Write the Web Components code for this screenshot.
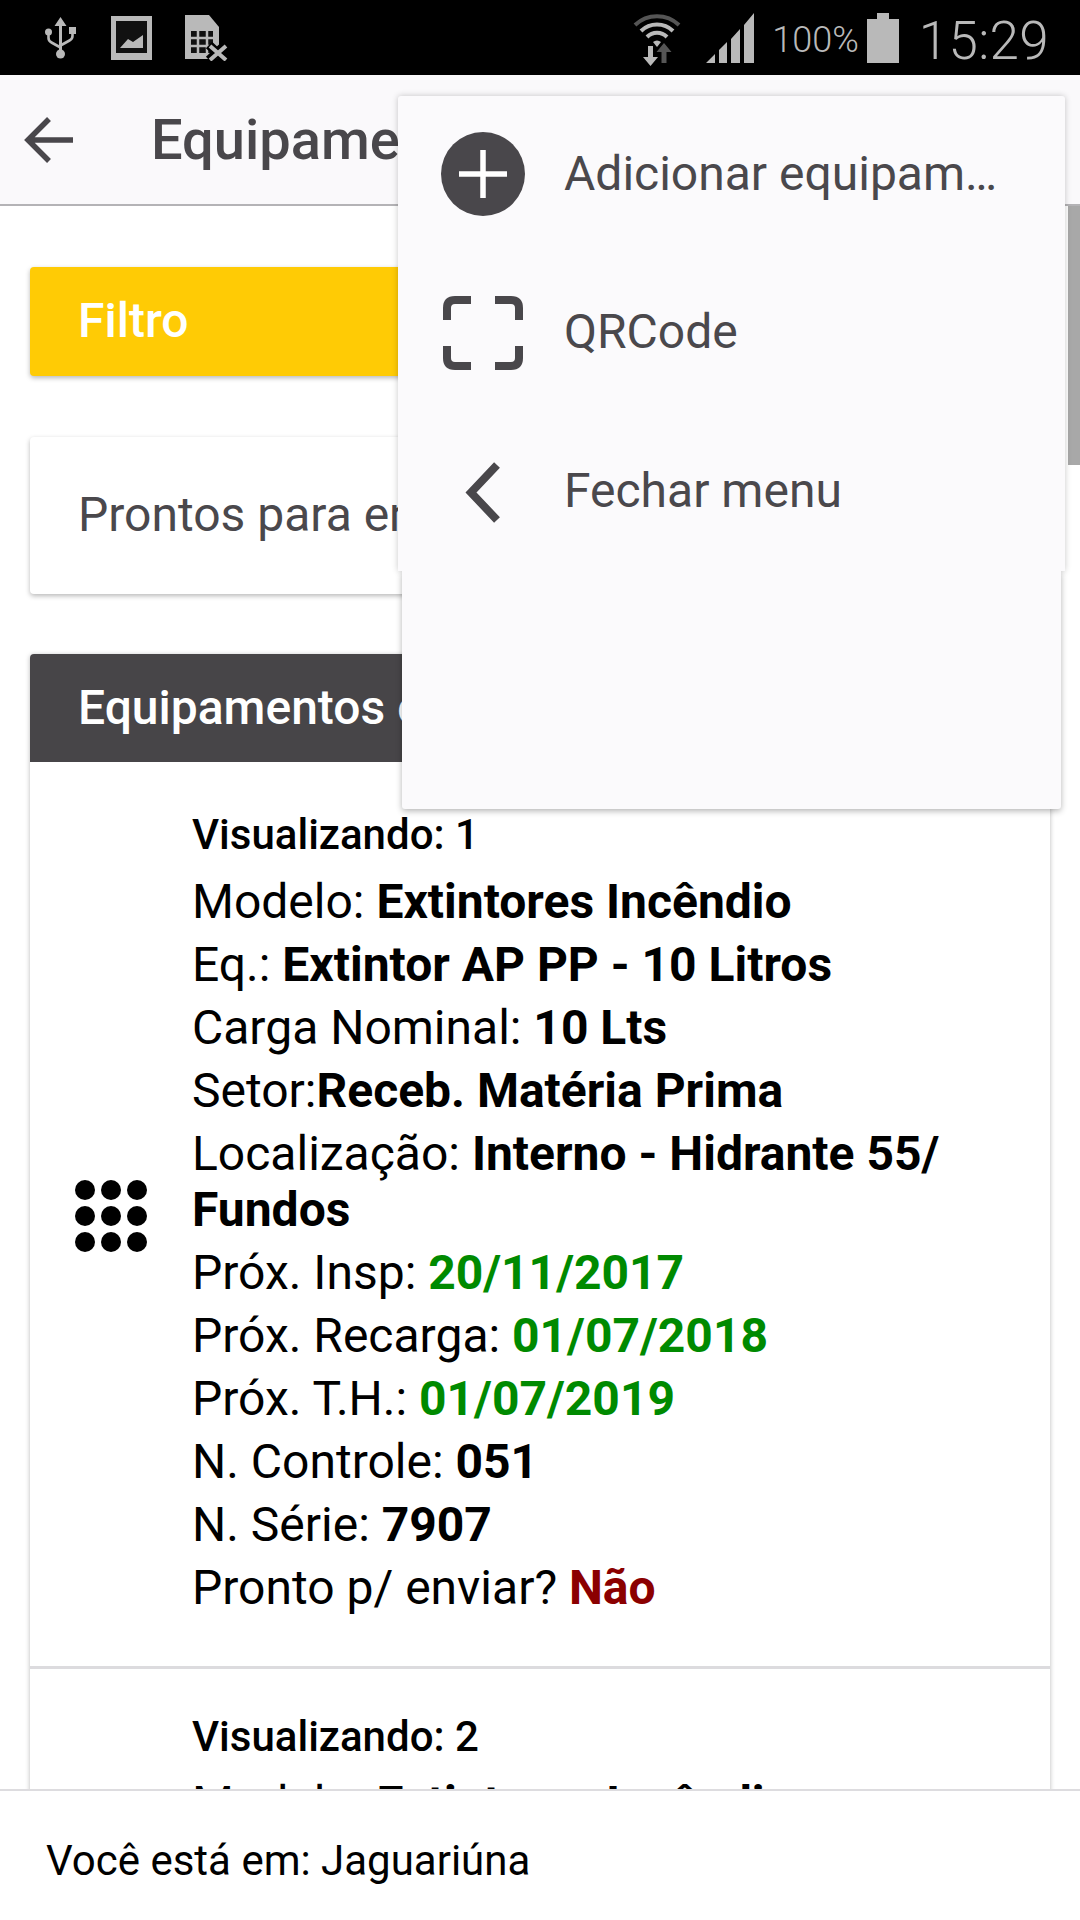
<!DOCTYPE html>
<html lang="pt-BR">
<head>
<meta charset="utf-8">
<title>Equipamentos</title>
<style>
  html, body { margin: 0; padding: 0; }
  body { width: 1080px; height: 1920px; overflow: hidden; font-family: Roboto, "Liberation Sans", sans-serif; background: #fff; }
</style>
</head>
<body>
<app-screen>
  <status-bar slot="status"></status-bar>
  <app-header slot="header">Equipamentos</app-header>

  <info-card tone="yellow">Filtro</info-card>
  <info-card tone="white">Prontos para enviar</info-card>
  <equipment-list heading="Equipamentos c">
    <equipment-row>
      <eq-line head>Visualizando: 1</eq-line>
      <eq-line>Modelo: <b>Extintores Incêndio</b></eq-line>
      <eq-line>Eq.: <b>Extintor AP PP - 10 Litros</b></eq-line>
      <eq-line>Carga Nominal: <b>10 Lts</b></eq-line>
      <eq-line>Setor:<b>Receb. Matéria Prima</b></eq-line>
      <eq-line>Localização: <b>Interno - Hidrante 55/ Fundos</b></eq-line>
      <eq-line>Próx. Insp: <b class="ok">20/11/2017</b></eq-line>
      <eq-line>Próx. Recarga: <b class="ok">01/07/2018</b></eq-line>
      <eq-line>Próx. T.H.: <b class="ok">01/07/2019</b></eq-line>
      <eq-line>N. Controle: <b>051</b></eq-line>
      <eq-line>N. Série: <b>7907</b></eq-line>
      <eq-line>Pronto p/ enviar? <b class="no">Não</b></eq-line>
    </equipment-row>
    <!-- the rest of this row is under the footer, min-height keeps its dots out of view -->
    <equipment-row style="min-height: 900px; align-items: start">
      <eq-line head>Visualizando: 2</eq-line>
      <eq-line>Modelo: <b>Extintores Incêndio</b></eq-line>
    </equipment-row>
  </equipment-list>

  <side-menu slot="overlay">
    <menu-item icon="plus">Adicionar equipam…</menu-item>
    <menu-item icon="scan">QRCode</menu-item>
    <menu-item icon="back">Fechar menu</menu-item>
  </side-menu>

  <app-footer slot="footer">Você está em: Jaguariúna</app-footer>
</app-screen>

<script>
class AppScreen extends HTMLElement {
  constructor() {
    super();
    this.attachShadow({ mode: "open" }).innerHTML = `
      <style>
        :host { display: flex; flex-direction: column; position: relative; width: 1080px; height: 1920px; overflow: hidden; }
        .content { flex: 1; min-height: 0; overflow: hidden; padding: 61px 30px 0; display: flex; flex-direction: column; gap: 61px; }
        .scrollbar { position: absolute; right: 0; top: 206px; width: 12px; height: 259px; background: #a8a8a8; }
      </style>
      <slot name="status"></slot>
      <slot name="header"></slot>
      <div class="content"><slot></slot></div>
      <slot name="footer"></slot>
      <div class="scrollbar"></div>
      <slot name="overlay"></slot>
    `;
  }
}

class StatusBar extends HTMLElement {
  constructor() {
    super();
    this.attachShadow({ mode: "open" }).innerHTML = `
      <style>
        :host { display: flex; align-items: center; justify-content: space-between; height: 75px; background: #000; color: #b9b9b9; font-family: Roboto, sans-serif; font-weight: 300; flex: none; }
        .left, .right { display: flex; align-items: center; }
        .left { padding-left: 45px; gap: 35px; }
        .right { padding-right: 31px; }
        svg { display: block; }
        .pct { font-size: 36px; margin: 0 8px 0 18px; padding-top: 5px; }
        .time { font-size: 53px; margin-left: 20px; letter-spacing: .3px; padding-top: 7px; }
      </style>
      <div class="left">
        <svg width="31" height="42" viewBox="0 0 31 42" fill="#b9b9b9">
          <path d="M15.500 0l6 9h-4.500v24h-3v-24h-4.500z"/>
          <circle cx="15.500" cy="37" r="4.500"/>
          <circle cx="3.500" cy="15" r="3.500"/>
          <rect x="24" y="10" width="7" height="7"/>
          <path d="M3.500 15v6q0 3 3 4.500l9 5M27.500 15v4q0 3-3 4.500l-9 5" fill="none" stroke="#b9b9b9" stroke-width="2.600"/>
        </svg>
        <svg width="41" height="44" viewBox="0 0 41 44">
          <rect x="0" y="0" width="41" height="44" fill="#b9b9b9"/>
          <rect x="5" y="5" width="31" height="32" fill="#111"/>
          <path d="M9 32l8-9 5 3 10-7v13z" fill="#b9b9b9"/>
        </svg>
        <svg style="margin-left:-2px" width="44" height="46" viewBox="0 0 44 46">
          <path d="M0 0h24l10 12v32h-34z" fill="#b9b9b9"/>
          <rect x="6" y="16" width="22" height="22" fill="#111"/>
          <path d="M13 16v22M22 16v22M6 23h22M6 31h22" stroke="#b9b9b9" stroke-width="2.500"/>
          <path d="M24 30l16 15M40 30l-16 15" stroke="#000" stroke-width="9"/>
          <path d="M25 31l16 14M41 31l-16 14" stroke="#b9b9b9" stroke-width="4"/>
        </svg>
      </div>
      <div class="right">
        <svg width="50" height="56" viewBox="0 0 50 56" fill="none">
          <path d="M3 15a32 32 0 0 1 44 0" stroke="#555" stroke-width="4"/>
          <path d="M9 21a23 23 0 0 1 32 0" stroke="#b9b9b9" stroke-width="4"/>
          <path d="M15 27a14 14 0 0 1 20 0" stroke="#b9b9b9" stroke-width="4"/>
          <path d="M21 32a6 6 0 0 1 8 0l-4 5z" fill="#b9b9b9"/>
          <path d="M16 36h5v11h5l-7.500 9-7.500-9h5z" fill="#b9b9b9"/>
          <path d="M32 33l7.500 9h-5v11h-5v-11h-5z" fill="#555"/>
        </svg>
        <svg style="margin-left:24px" width="48" height="50" viewBox="0 0 48 50" fill="#b9b9b9">
          <path d="M0 50l9-9v9zM13 37l8-8v21h-8zM25 26l9-10v34h-9zM38 12l10-12v50h-10z"/>
        </svg>
        <span class="pct">100%</span>
        <svg width="32" height="50" viewBox="0 0 32 50" fill="#b9b9b9">
          <path d="M10 0h12v6h10v44h-32v-44h10z"/>
        </svg>
        <span class="time">15:29</span>
      </div>
    `;
  }
}

class AppHeader extends HTMLElement {
  constructor() {
    super();
    this.attachShadow({ mode: "open" }).innerHTML = `
      <style>
        :host { display: flex; align-items: center; box-sizing: border-box; height: 131px; padding: 0 0 0 24px; background: #faf9fb; border-bottom: 2px solid #b4b3b6; color: #49474b; flex: none; }
        svg { display: block; flex: none; }
        .title { margin-left: 78px; font: 500 56px/60px Roboto, sans-serif; white-space: nowrap; }
      </style>
      <svg width="49" height="46" viewBox="0 0 49 46" fill="none" stroke="#49474b" stroke-width="5.500">
        <path d="M49 23h-45M25 2l-21 21 21 21"/>
      </svg>
      <span class="title"><slot></slot></span>
    `;
  }
}

class InfoCard extends HTMLElement {
  constructor() {
    super();
    const yellow = this.getAttribute("tone") === "yellow";
    this.attachShadow({ mode: "open" }).innerHTML = `
      <style>
        :host { display: flex; align-items: center; flex: none; box-sizing: border-box; border-radius: 4px; padding: 0 0 2px 48px; white-space: nowrap; overflow: hidden;
          height: ${yellow ? 109 : 157}px; background: ${yellow ? "#ffcb05" : "#fff"}; color: ${yellow ? "#fff" : "#4a484c"};
          font: ${yellow ? 500 : 400} 48px Roboto, sans-serif;
          box-shadow: 0 2px 5px rgba(0,0,0,.28); }
      </style>
      <slot></slot>
    `;
  }
}

class EquipmentList extends HTMLElement {
  constructor() {
    super();
    this.attachShadow({ mode: "open" }).innerHTML = `
      <style>
        :host { display: block; flex: none; margin-top: -1px; border-radius: 4px 4px 0 0; box-shadow: 0 1px 5px rgba(0,0,0,.28); background: #fff; }
        .head { box-sizing: border-box; height: 108px; padding: 0 0 2px 48px; display: flex; align-items: center; background: #474548; color: #fff; font: 500 48px Roboto, sans-serif; border-radius: 4px 4px 0 0; }
        .rows { padding-top: 5px; }
      </style>
      <div class="head">${this.getAttribute("heading")}</div>
      <div class="rows"><slot></slot></div>
    `;
  }
}

class EquipmentRow extends HTMLElement {
  constructor() {
    super();
    this.attachShadow({ mode: "open" }).innerHTML = `
      <style>
        :host { display: grid; grid-template-columns: 162px 1fr; align-items: center; box-sizing: border-box; padding: 43px 60px 43px 0; border-bottom: 3px solid #dcdbde; }
        .dots { align-self: center; justify-self: center; display: grid; grid-template-columns: repeat(3, 20px); gap: 6px; margin-top: -2px; }
        .dots i { width: 20px; height: 20px; border-radius: 50%; background: #000; }
      </style>
      <div class="dots"><i></i><i></i><i></i><i></i><i></i><i></i><i></i><i></i><i></i></div>
      <div class="lines"><slot></slot></div>
    `;
  }
}

class EqLine extends HTMLElement {
  constructor() {
    super();
    this.attachShadow({ mode: "open" }).innerHTML = `
      <style>
        :host { display: block; margin-bottom: 7px; color: #000; font: 400 48px/56px Roboto, sans-serif; }
        :host([head]) { font-size: 42px; font-weight: 500; line-height: 50px; margin-bottom: 14px; }
        ::slotted(b) { font-weight: 700; }
        ::slotted(.ok) { color: #008a00; }
        ::slotted(.no) { color: #8b0000; }
      </style>
      <slot></slot>
    `;
  }
}

class SideMenu extends HTMLElement {
  constructor() {
    super();
    this.attachShadow({ mode: "open" }).innerHTML = `
      <style>
        :host { position: absolute; left: 398px; top: 96px; width: 667px; }
        .top { box-sizing: border-box; height: 475px; background: #fbfafc; display: flex; flex-direction: column; gap: 2.500px; box-shadow: 0 0 6px rgba(0,0,0,.22); border-radius: 3px 3px 0 0; }
        .rest { position: relative; height: 238px; margin: 0 4px; background: #fbfafc; box-shadow: 0 2px 6px rgba(0,0,0,.3); clip-path: inset(0 -10px -10px -10px); border-radius: 0 0 3px 3px; }
      </style>
      <div class="top"><slot></slot></div>
      <div class="rest"></div>
    `;
  }
}

const menuIcons = {
  plus: `<circle cx="42" cy="42" r="42" fill="#49474b"/><path d="M42 18v48M18 42h48" stroke="#fff" stroke-width="5.500"/>`,
  scan: `<path d="M6 29v-12q0-8 8-8h16M54 9h16q8 0 8 8v12M78 55v12q0 8-8 8h-16M30 75h-16q-8 0-8-8v-12" fill="none" stroke="#49474b" stroke-width="8"/>`,
  back: `<path d="M56 16l-26 27.500 26 27.500" fill="none" stroke="#49474b" stroke-width="8"/>`
};

class MenuItem extends HTMLElement {
  constructor() {
    super();
    this.attachShadow({ mode: "open" }).innerHTML = `
      <style>
        :host { display: flex; align-items: center; height: 156px; padding-left: 43px; color: #4a484c; font: 400 48px Roboto, sans-serif; white-space: nowrap; }
        svg { display: block; flex: none; margin-right: 39px; }
        .label { padding-bottom: 2px; }
      </style>
      <svg width="84" height="84" viewBox="0 0 84 84">${menuIcons[this.getAttribute("icon")]}</svg>
      <span class="label"><slot></slot></span>
    `;
  }
}

class AppFooter extends HTMLElement {
  constructor() {
    super();
    this.attachShadow({ mode: "open" }).innerHTML = `
      <style>
        :host { display: flex; align-items: center; box-sizing: border-box; height: 131px; padding: 10px 0 0 46px; background: #fff; border-top: 2px solid #dddcdf; color: #000; font: 400 42px Roboto, sans-serif; flex: none; }
      </style>
      <slot></slot>
    `;
  }
}

customElements.define("app-screen", AppScreen);
customElements.define("status-bar", StatusBar);
customElements.define("app-header", AppHeader);
customElements.define("info-card", InfoCard);
customElements.define("equipment-list", EquipmentList);
customElements.define("equipment-row", EquipmentRow);
customElements.define("eq-line", EqLine);
customElements.define("side-menu", SideMenu);
customElements.define("menu-item", MenuItem);
customElements.define("app-footer", AppFooter);
</script>
</body>
</html>
